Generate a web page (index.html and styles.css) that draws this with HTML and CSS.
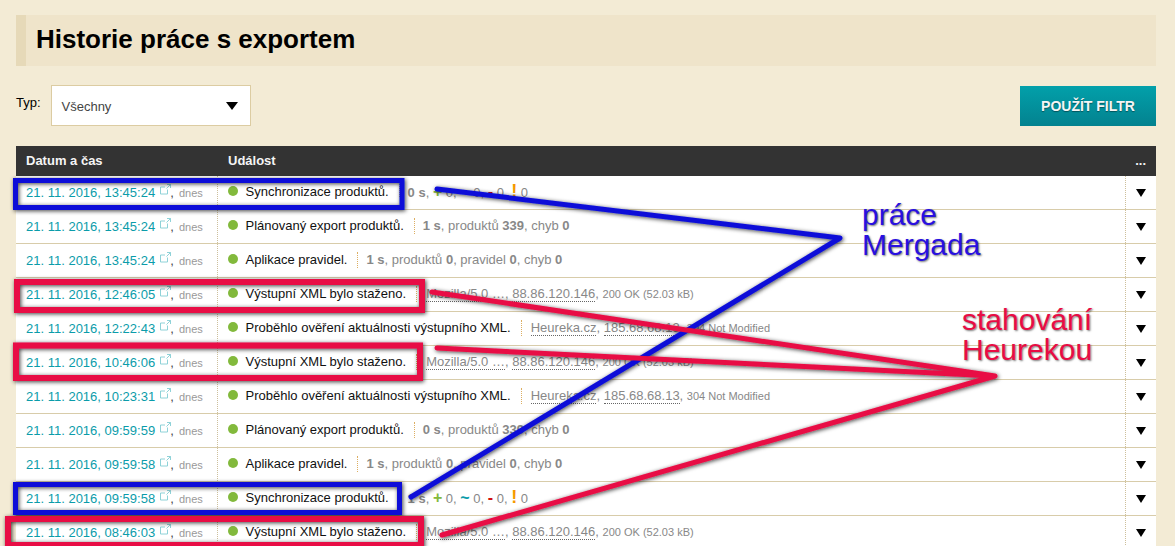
FILE: index.html
```html
<!DOCTYPE html>
<html lang="cs">
<head>
<meta charset="utf-8">
<title>Historie práce s exportem</title>
<link rel="stylesheet" href="styles.css">
</head>
<body>
<svg width="0" height="0" class="defs">
  <symbol id="ext" viewBox="0 0 11 11"><path d="M7.500 5.500v4.500h-7v-7h4.500M7 .5h3.500v3.500M10.500 .5L6.500 4.500" fill="none" stroke="#82cdd4" stroke-width=".9"/></symbol>
</svg>
<main class="page">
  <h1 class="title">Historie práce s exportem</h1>
  <form class="filter">
    <label class="filter-label">Typ:</label>
    <div class="select"><span>Všechny</span><i class="tri tri-big"></i></div>
    <button type="button" class="btn">POUŽÍT FILTR</button>
  </form>
  <table class="log">
    <thead><tr><th class="c-date">Datum a čas</th><th class="c-event">Událost</th><th class="c-more">...</th></tr></thead>
    <tbody>
      <tr><td class="c-date"><a>21. 11. 2016, 13:45:24</a> <svg class="ext"><use href="#ext"/></svg><span class="comma">,</span> <span class="ago">dnes</span></td>
        <td class="c-event"><div class="ev"><i class="dot"></i><span class="ev-name">Synchronizace produktů.</span><span class="meta"><b>0 s</b>, <b class="plus">+</b> 0, <b class="tilde">~</b> 0, <b class="minus">-</b> 0, <b class="warn">!</b> 0</span></div></td>
        <td class="c-more"><i class="tri"></i></td></tr>
      <tr><td class="c-date"><a>21. 11. 2016, 13:45:24</a> <svg class="ext"><use href="#ext"/></svg><span class="comma">,</span> <span class="ago">dnes</span></td>
        <td class="c-event"><div class="ev"><i class="dot"></i><span class="ev-name">Plánovaný export produktů.</span><span class="meta"><b>1 s</b>, produktů <b>339</b>, chyb <b>0</b></span></div></td>
        <td class="c-more"><i class="tri"></i></td></tr>
      <tr><td class="c-date"><a>21. 11. 2016, 13:45:24</a> <svg class="ext"><use href="#ext"/></svg><span class="comma">,</span> <span class="ago">dnes</span></td>
        <td class="c-event"><div class="ev"><i class="dot"></i><span class="ev-name">Aplikace pravidel.</span><span class="meta"><b>1 s</b>, produktů <b>0</b>, pravidel <b>0</b>, chyb <b>0</b></span></div></td>
        <td class="c-more"><i class="tri"></i></td></tr>
      <tr><td class="c-date"><a>21. 11. 2016, 12:46:05</a> <svg class="ext"><use href="#ext"/></svg><span class="comma">,</span> <span class="ago">dnes</span></td>
        <td class="c-event"><div class="ev"><i class="dot"></i><span class="ev-name">Výstupní XML bylo staženo.</span><span class="meta"><u>Mozilla/5.0 …</u>, <u>88.86.120.146</u>, <small>200 OK (52.03 kB)</small></span></div></td>
        <td class="c-more"><i class="tri"></i></td></tr>
      <tr><td class="c-date"><a>21. 11. 2016, 12:22:43</a> <svg class="ext"><use href="#ext"/></svg><span class="comma">,</span> <span class="ago">dnes</span></td>
        <td class="c-event"><div class="ev"><i class="dot"></i><span class="ev-name">Proběhlo ověření aktuálnosti výstupního XML.</span><span class="meta"><u>Heureka.cz</u>, <u>185.68.68.13</u>, <small>304 Not Modified</small></span></div></td>
        <td class="c-more"><i class="tri"></i></td></tr>
      <tr><td class="c-date"><a>21. 11. 2016, 10:46:06</a> <svg class="ext"><use href="#ext"/></svg><span class="comma">,</span> <span class="ago">dnes</span></td>
        <td class="c-event"><div class="ev"><i class="dot"></i><span class="ev-name">Výstupní XML bylo staženo.</span><span class="meta"><u>Mozilla/5.0 …</u>, <u>88.86.120.146</u>, <small>200 OK (52.03 kB)</small></span></div></td>
        <td class="c-more"><i class="tri"></i></td></tr>
      <tr><td class="c-date"><a>21. 11. 2016, 10:23:31</a> <svg class="ext"><use href="#ext"/></svg><span class="comma">,</span> <span class="ago">dnes</span></td>
        <td class="c-event"><div class="ev"><i class="dot"></i><span class="ev-name">Proběhlo ověření aktuálnosti výstupního XML.</span><span class="meta"><u>Heureka.cz</u>, <u>185.68.68.13</u>, <small>304 Not Modified</small></span></div></td>
        <td class="c-more"><i class="tri"></i></td></tr>
      <tr><td class="c-date"><a>21. 11. 2016, 09:59:59</a> <svg class="ext"><use href="#ext"/></svg><span class="comma">,</span> <span class="ago">dnes</span></td>
        <td class="c-event"><div class="ev"><i class="dot"></i><span class="ev-name">Plánovaný export produktů.</span><span class="meta"><b>0 s</b>, produktů <b>339</b>, chyb <b>0</b></span></div></td>
        <td class="c-more"><i class="tri"></i></td></tr>
      <tr><td class="c-date"><a>21. 11. 2016, 09:59:58</a> <svg class="ext"><use href="#ext"/></svg><span class="comma">,</span> <span class="ago">dnes</span></td>
        <td class="c-event"><div class="ev"><i class="dot"></i><span class="ev-name">Aplikace pravidel.</span><span class="meta"><b>1 s</b>, produktů <b>0</b>, pravidel <b>0</b>, chyb <b>0</b></span></div></td>
        <td class="c-more"><i class="tri"></i></td></tr>
      <tr><td class="c-date"><a>21. 11. 2016, 09:59:58</a> <svg class="ext"><use href="#ext"/></svg><span class="comma">,</span> <span class="ago">dnes</span></td>
        <td class="c-event"><div class="ev"><i class="dot"></i><span class="ev-name">Synchronizace produktů.</span><span class="meta"><b>1 s</b>, <b class="plus">+</b> 0, <b class="tilde">~</b> 0, <b class="minus">-</b> 0, <b class="warn">!</b> 0</span></div></td>
        <td class="c-more"><i class="tri"></i></td></tr>
      <tr><td class="c-date"><a>21. 11. 2016, 08:46:03</a> <svg class="ext"><use href="#ext"/></svg><span class="comma">,</span> <span class="ago">dnes</span></td>
        <td class="c-event"><div class="ev"><i class="dot"></i><span class="ev-name">Výstupní XML bylo staženo.</span><span class="meta"><u>Mozilla/5.0 …</u>, <u>88.86.120.146</u>, <small>200 OK (52.03 kB)</small></span></div></td>
        <td class="c-more"><i class="tri"></i></td></tr>
    </tbody>
  </table>
</main>
<svg class="marks" width="1175" height="546" viewBox="0 0 1175 546">
  <defs><filter id="sh" x="0" y="0" width="1175" height="546" filterUnits="userSpaceOnUse"><feDropShadow dx="1" dy="1" stdDeviation="2" flood-color="#000" flood-opacity=".75"/></filter></defs>
  <g filter="url(#sh)" fill="none" stroke-linejoin="round" stroke-linecap="round">
    <g stroke="#0a10d8" stroke-width="5">
      <path d="M437 189L840 238L411 497"/>
      <rect x="15.500" y="180.500" width="386.500" height="27" stroke-linejoin="miter"/>
      <rect x="15.500" y="484.500" width="384" height="28" stroke-linejoin="miter"/>
    </g>
    <g stroke="#e80c44" stroke-width="5">
      <path d="M432 292L995 376L437 348M995 376L442 535"/>
      <rect x="17" y="282" width="405" height="28" stroke-width="6" stroke-linejoin="miter"/>
      <rect x="16" y="345.500" width="404" height="32.500" stroke-width="6" stroke-linejoin="miter"/>
      <rect x="8" y="519" width="413" height="26" stroke-width="6" stroke-linejoin="miter"/>
    </g>
  </g>
</svg>
<div class="note note-blue">práce<br>Mergada</div>
<div class="note note-red">stahování<br>Heurekou</div>
</body>
</html>
```
FILE: styles.css
```css
html, body { margin: 0; padding: 0; height: 546px; overflow: hidden; }
body { background: #f3ebd5; font-family: "Liberation Sans", Arial, sans-serif; font-size: 13px; color: #000; position: relative; }
.defs { position: absolute; }
.page { padding: 15px 19px 0 16px; display: flex; flex-direction: column; }
.title { margin: 0; height: 51px; line-height: 49px; box-sizing: border-box; padding-left: 10px; border-left: 10px solid #e6d9b8; background: #efe4ca; font-size: 26px; font-weight: bold; }
.filter { display: flex; align-items: flex-start; margin-top: 19px; height: 61px; }
.filter-label { width: 35px; line-height: 16px; padding-top: 10px; font-size: 13px; }
.select { box-sizing: border-box; width: 200px; height: 41px; background: #fff; border: 1px solid #dccca2; display: flex; align-items: center; justify-content: space-between; padding: 0 12px 0 9.500px; color: #444; font-size: 13px; }
.select span { position: relative; top: 1px; }
.btn { margin: 1px 0 0 auto; width: 136px; height: 40px; border: 0; background: linear-gradient(#02a0aa, #03828f); color: #f5f5f5; font: bold 14px "Liberation Sans", Arial, sans-serif; text-shadow: 0 1px 1px #0006; padding: 0; }
.tri { display: inline-block; width: 0; height: 0; border-left: 5px solid transparent; border-right: 5px solid transparent; border-top: 8px solid #000; }
.tri-big { border-left-width: 6.500px; border-right-width: 6.500px; border-top-width: 8px; }
.log { width: 1140px; border-collapse: collapse; table-layout: fixed; background: #fff; }
.log th { height: 28px; padding: 0 0 2px 10px; background: #333; color: #f5f5f5; font-size: 13px; font-weight: bold; text-align: left; }
.log th.c-date { width: 191px; }
.log th.c-event { padding-left: 11px; }
.log th.c-more { width: 21px; padding-left: 0; padding-right: 10px; text-align: right; }
.log td { height: 33px; padding: 0; border-bottom: 1px solid #d8ccaa; white-space: nowrap; overflow: hidden; }
.log td.c-date { padding-left: 10px; padding-bottom: 1px; height: 32px; border-right: 1px dotted #cdbf9b; color: #999; font-size: 11px; }
.log td.c-date a { color: #0b9caa; font-size: 13px; }
.ext { width: 11px; height: 11px; vertical-align: 2px; margin-left: 2px; }
.comma { color: #444; font-size: 13px; margin-left: -1px; }
.ago { color: #999; margin-left: 2px; }
.log td.c-event { padding-left: 10px; }
.ev { display: flex; align-items: center; position: relative; top: -1px; }
.dot { width: 10px; height: 10px; border-radius: 50%; background: #82b93c; margin-right: 8px; position: relative; top: -1px; }
.ev-name { color: #111; }
.meta { margin-left: 10px; padding-left: 9px; color: #888; font-size: 13px; }
.meta::before { content: ""; position: absolute; margin-left: -9px; height: 16px; border-left: 1px dotted #dcae62; }
.meta b { color: #888; }
.meta u { text-decoration: none; border-bottom: 1px dotted #666; }
.meta u:first-child { margin-left: 1px; }
.meta small { font-size: 11px; }
.plus { color: #82b93c !important; font-size: 16px; }
.tilde { color: #0b9caa !important; font-size: 16px; }
.minus { color: #d01010 !important; font-size: 16px; }
.warn { color: #f59a00 !important; font-size: 18px; }
.log td.c-more { text-align: center; padding-bottom: 1px; height: 32px; border-left: 1px dotted #cdbf9b; }
.marks { position: absolute; left: 0; top: 0; pointer-events: none; }
.note { position: absolute; font-size: 30px; line-height: 30px; text-shadow: 1px 1px 2px #0008; }
.note-blue { left: 862px; top: 200px; color: #2810e0; }
.note-red { left: 962px; top: 305px; color: #e80c44; }
```
